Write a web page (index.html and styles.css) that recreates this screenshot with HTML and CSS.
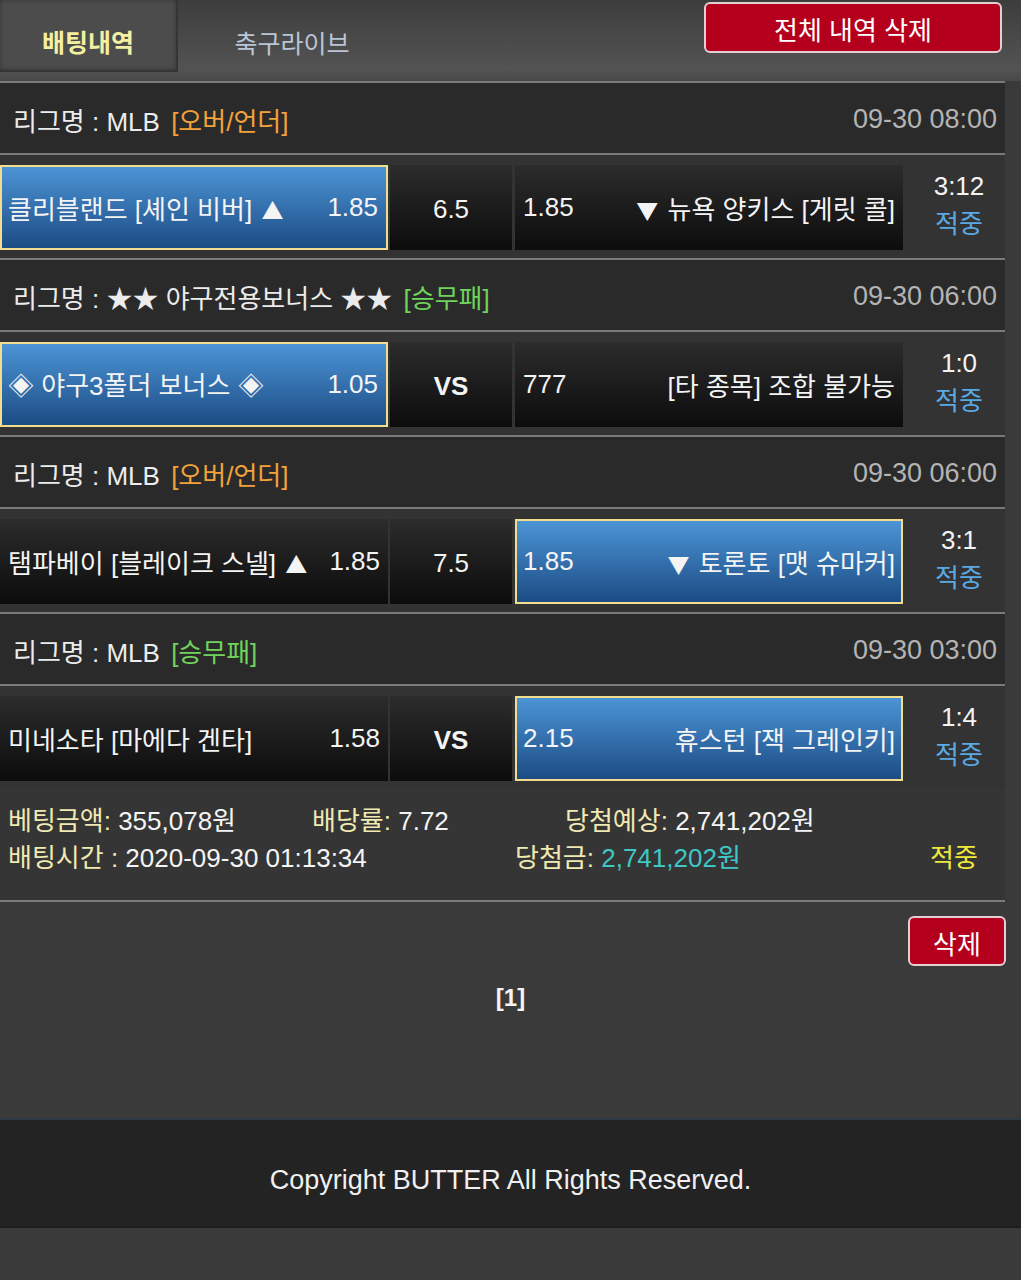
FILE: index.html
```html
<!DOCTYPE html>
<html lang="ko">
<head>
  <meta charset="UTF-8" />
  <meta name="viewport" content="width=device-width, initial-scale=1.0"/>
  <title>배팅내역</title>
  <link rel="stylesheet" href="styles.css">
</head>
<body>
  <!-- 상단 탭 -->
  <div class="top">
    <div class="tabs">
      <div class="tab active">배팅내역</div>
      <div class="tab">축구라이브</div>
    </div>
    <button class="btn-red btn-all">전체 내역 삭제</button>
  </div>

  <!-- 배팅 목록 -->
  <div class="bet-list">
    <div class="league">
      <div>리그명 : MLB <span class="tag orange">[오버/언더]</span></div>
      <div class="date">09-30 08:00</div>
    </div>
    <div class="match">
      <div class="cell home picked"><span>클리블랜드 [셰인 비버] <span class="arrow">▲</span></span><span>1.85</span></div>
      <div class="cell mid">6.5</div>
      <div class="cell away"><span>1.85</span><span><span class="arrow">▼</span> 뉴욕 양키스 [게릿 콜]</span></div>
      <div class="result"><span>3:12</span><span class="hit">적중</span></div>
    </div>

    <div class="league">
      <div>리그명 : ★★ 야구전용보너스 ★★ <span class="tag green">[승무패]</span></div>
      <div class="date">09-30 06:00</div>
    </div>
    <div class="match">
      <div class="cell home picked"><span><span class="diamond">◈</span> 야구3폴더 보너스 <span class="diamond">◈</span></span><span>1.05</span></div>
      <div class="cell mid vs">VS</div>
      <div class="cell away"><span>777</span><span>[타 종목] 조합 불가능</span></div>
      <div class="result"><span>1:0</span><span class="hit">적중</span></div>
    </div>

    <div class="league">
      <div>리그명 : MLB <span class="tag orange">[오버/언더]</span></div>
      <div class="date">09-30 06:00</div>
    </div>
    <div class="match">
      <div class="cell home"><span>탬파베이 [블레이크 스넬] <span class="arrow">▲</span></span><span>1.85</span></div>
      <div class="cell mid">7.5</div>
      <div class="cell away picked"><span>1.85</span><span><span class="arrow">▼</span> 토론토 [맷 슈마커]</span></div>
      <div class="result"><span>3:1</span><span class="hit">적중</span></div>
    </div>

    <div class="league">
      <div>리그명 : MLB <span class="tag green">[승무패]</span></div>
      <div class="date">09-30 03:00</div>
    </div>
    <div class="match last">
      <div class="cell home"><span>미네소타 [마에다 겐타]</span><span>1.58</span></div>
      <div class="cell mid vs">VS</div>
      <div class="cell away picked"><span>2.15</span><span>휴스턴 [잭 그레인키]</span></div>
      <div class="result"><span>1:4</span><span class="hit">적중</span></div>
    </div>

    <div class="summary">
      <div class="sum-row">
        <div class="s1"><span class="lbl">베팅금액:</span> 355,078원</div>
        <div class="s2"><span class="lbl">배당률:</span> 7.72</div>
        <div><span class="lbl">당첨예상:</span> 2,741,202원</div>
      </div>
      <div class="sum-row">
        <div class="s3"><span class="lbl">배팅시간 :</span> 2020-09-30 01:13:34</div>
        <div class="s4"><span class="lbl">당첨금:</span> <span class="cyan">2,741,202원</span></div>
        <div class="win">적중</div>
      </div>
    </div>
  </div>

  <div class="actions">
    <button class="btn-red btn-del">삭제</button>
  </div>

  <div class="paging">[1]</div>

  <div class="footer">Copyright BUTTER All Rights Reserved.</div>
</body>
</html>
```

FILE: styles.css
```css
* {
  margin: 0;
  padding: 0;
  box-sizing: border-box;
  font-family: 'Liberation Sans', 'Noto Sans CJK KR', sans-serif;
}

body {
  background-color: #3a3a3a;
  color: #f2f2f2;
  width: 1021px;
}

.top {
  height: 81px;
  display: flex;
  justify-content: space-between;
  align-items: flex-start;
  background: linear-gradient(#3d3d3d, #535353 85%, #484848);
}

.tabs {
  display: flex;
  gap: 25px;
}

.tab {
  width: 178px;
  height: 72px;
  display: flex;
  align-items: center;
  justify-content: center;
  padding-top: 12px;
  font-size: 25px;
  color: #b9c5d6;
}

.tab.active {
  background-color: #4c4c4c;
  color: #f4f0a2;
  font-weight: bold;
  border-right: 2px solid #353535;
  border-bottom: 2px solid #353535;
  box-shadow: inset 0 0 4px rgba(0, 0, 0, 0.35);
}

.btn-red {
  background-color: #b5001d;
  color: white;
  border: 2px solid #e3cfd2;
  border-radius: 6px;
  font-size: 26px;
  cursor: pointer;
}

.btn-all {
  width: 298px;
  height: 51px;
  margin-top: 2px;
  margin-right: 19px;
  padding-top: 2px;
}

.bet-list {
  width: 1005px;
  border-top: 2px solid #7a7a7a;
}

.league {
  height: 72px;
  display: flex;
  justify-content: space-between;
  align-items: center;
  padding: 2px 8px 0 13px;
  background-color: #2a2a2a;
  font-size: 26px;
  color: #ececec;
  border-bottom: 2px solid #7a7a7a;
}

.tag {
  margin-left: 4px;
}

.tag.orange {
  color: #f2a23a;
}

.tag.green {
  color: #6fd35c;
}

.date {
  color: #b4b4b4;
  font-size: 27px;
}

.match {
  height: 105px;
  display: flex;
  padding: 10px 0 10px;
  background-color: #333;
  border-bottom: 2px solid #7a7a7a;
  font-size: 26px;
}

.match.last {
  height: 103px;
  border-bottom: none;
}

.cell {
  height: 85px;
  display: flex;
  align-items: center;
  background: linear-gradient(#2c2c2c, #0c0c0c);
  color: #f4f4f4;
}

.arrow {
  font-family: 'Noto Sans CJK KR', sans-serif;
  font-size: 22px;
  margin: 0 2px;
}

.diamond {
  font-family: 'Noto Sans CJK KR', sans-serif;
  font-size: 26px;
}

.home {
  width: 388px;
  justify-content: space-between;
  padding: 0 8px 0 8px;
}

.mid {
  width: 122px;
  margin-left: 2px;
  justify-content: center;
  padding-top: 4px;
}

.mid.vs {
  font-weight: bold;
}

.away {
  width: 388px;
  margin-left: 3px;
  justify-content: space-between;
  padding: 0 8px 0 8px;
}

.cell.picked {
  background: linear-gradient(#4c94d6, #1c4c84);
  border: 2px solid #f2dc8e;
  padding-left: 6px;
  padding-right: 6px;
}

.home.picked {
  padding-right: 8px;
}

.result {
  flex: 1;
  display: flex;
  flex-direction: column;
  align-items: center;
  justify-content: center;
  padding-left: 10px;
  padding-bottom: 4px;
  line-height: 38px;
  color: #f4f4f4;
}

.result .hit {
  color: #5aa9e4;
}

.summary {
  padding: 14px 0 23px 8px;
  background-color: #353535;
  border-bottom: 2px solid #7a7a7a;
  font-size: 26px;
  line-height: 37px;
  color: #f4f4f4;
}

.sum-row {
  display: flex;
}

.s1 {
  width: 304px;
}

.s2 {
  width: 253px;
}

.s3 {
  width: 507px;
}

.s4 {
  width: 415px;
}

.lbl {
  color: #f1e9b2;
}

.cyan {
  color: #3ec7c6;
}

.win {
  color: #efe93c;
}

.actions {
  display: flex;
  justify-content: flex-end;
  padding-top: 14px;
  padding-right: 15px;
}

.btn-del {
  width: 98px;
  height: 50px;
  padding-top: 2px;
}

.paging {
  text-align: center;
  height: 64px;
  line-height: 64px;
  font-size: 24px;
  font-weight: bold;
  color: #f4f4f4;
}

.footer {
  margin-top: 88px;
  height: 110px;
  display: flex;
  align-items: center;
  justify-content: center;
  padding-top: 14px;
  background-color: #232323;
  border-top: 2px solid #2d3a46;
  border-bottom: 2px solid #1d1d1d;
  font-size: 27px;
  color: #f0f0f0;
}
```
